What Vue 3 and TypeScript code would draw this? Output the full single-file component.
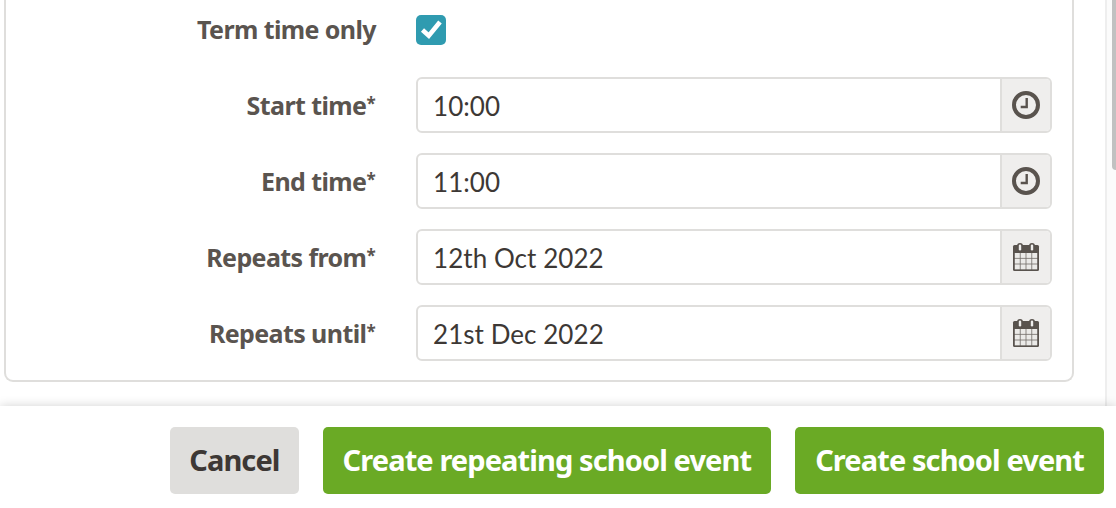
<script setup lang="ts">
interface Row { label: string; value: string; icon: 'clock' | 'cal' }
const rows: Row[] = [
  { label: 'Start time', value: '10:00', icon: 'clock' },
  { label: 'End time', value: '11:00', icon: 'clock' },
  { label: 'Repeats from', value: '12th Oct 2022', icon: 'cal' },
  { label: 'Repeats until', value: '21st Dec 2022', icon: 'cal' },
]
const colX = [2.8, 8.6, 14.4, 20.2]
const rowY = [11, 16.7, 22.4]
</script>

<template>
  <div class="page">
    <div class="main">
      <div class="scroller">
        <section class="panel">
          <div class="check-row">
            <span class="label">Term time only</span>
            <span class="checkbox">
              <svg viewBox="0 0 30 30" width="30" height="30"><path d="M6.500 15l6.300 5.700L24 7" fill="none" stroke="#fff" stroke-width="4.600"/></svg>
            </span>
          </div>
          <div v-for="r in rows" :key="r.label" class="row">
            <span class="label">{{ r.label }}<span class="req">*</span></span>
            <div class="field">
              <span class="value">{{ r.value }}</span>
              <span class="addon">
                <svg v-if="r.icon === 'clock'" viewBox="0 0 28 28" width="28" height="28">
                  <circle cx="14" cy="14" r="12" fill="none" stroke="#59534e" stroke-width="4"/>
                  <path d="M14.700 7v9H8.700" fill="none" stroke="#59534e" stroke-width="2.400"/>
                </svg>
                <svg v-else viewBox="0 0 28 30" width="28" height="30">
                  <rect x="1" y="3" width="26" height="26" rx="1.500" fill="#59534e"/>
                  <rect x="5" y="1" width="6" height="9" rx="3" fill="#59534e"/>
                  <rect x="17" y="1" width="6" height="9" rx="3" fill="#59534e"/>
                  <rect x="6.800" y="2.500" width="2.400" height="6" rx="1.200" fill="#efeeed"/>
                  <rect x="18.800" y="2.500" width="2.400" height="6" rx="1.200" fill="#efeeed"/>
                  <rect x="2.800" y="11" width="22.400" height="16.500" fill="#716c68"/>
                  <template v-for="y in rowY" :key="y">
                    <rect v-for="x in colX" :key="x" :x="x" :y="y" width="5" height="4.900" fill="#ebeae8"/>
                  </template>
                </svg>
              </span>
            </div>
          </div>
        </section>
      </div>
      <div class="track"><div class="thumb"></div></div>
    </div>
    <footer class="footer">
      <button class="btn cancel">Cancel</button>
      <button class="btn primary">Create repeating school event</button>
      <button class="btn primary">Create school event</button>
    </footer>
  </div>
</template>

<style>
html, body { margin: 0; background: #fff; overflow: hidden; }
</style>

<style scoped>
.page {
  width: 1116px;
  height: 508px;
  display: flex;
  flex-direction: column;
  font-family: "Noto Sans", sans-serif;
  overflow: hidden;
}
.main {
  height: 406px;
  display: flex;
  overflow: hidden;
}
.scroller {
  flex: 1;
  display: flex;
  flex-direction: column;
  padding: 0 31px 24px 4px;
}
.panel {
  flex: 1;
  border: 2px solid #dfdedc;
  border-top: 0;
  border-radius: 0 0 9px 9px;
  padding-bottom: 19px;
  display: flex;
  flex-direction: column;
  justify-content: flex-end;
  gap: 20px;
}
.check-row, .row {
  display: flex;
  align-items: center;
  gap: 41px;
}
.check-row { height: 30px; margin-bottom: 12px; gap: 40px; }
.check-row .label { padding-bottom: 2px; width: 370px; }
.row { height: 56px; padding-right: 20px; }
.label {
  width: 369px;
  text-align: right;
  font-weight: 700;
  font-size: 25px;
  letter-spacing: -0.6px;
  color: #5a544f;
  white-space: nowrap;
  flex: none;
}
.req { font-size: 17px; vertical-align: 5px; line-height: 0; }
.checkbox {
  width: 30px;
  height: 30px;
  background: #2f9bb0;
  border-radius: 5px;
  display: block;
}
.checkbox svg { display: block; }
.field {
  flex: 1;
  height: 56px;
  box-sizing: border-box;
  border: 2px solid #dfdedc;
  border-radius: 6px;
  display: flex;
  align-items: center;
  justify-content: space-between;
  overflow: hidden;
}
.value {
  padding: 2px 0 0 15px;
  font-family: Lato, sans-serif;
  font-size: 26px;
  color: #3d3835;
  letter-spacing: 0.05px;
}
.addon {
  width: 50px;
  height: 100%;
  box-sizing: border-box;
  border-left: 2px solid #dfdedc;
  background: #efeeed;
  display: flex;
  align-items: center;
  justify-content: center;
}
.track {
  width: 11px;
  box-sizing: border-box;
  border-left: 2px solid #eeeeee;
  background: #fbfbfb;
  position: relative;
}
.thumb {
  position: absolute;
  top: 0;
  right: 0;
  width: 4px;
  height: 170px;
  background: #c1c1c1;
  border-radius: 0 0 0 4px;
}
.footer {
  height: 102px;
  box-sizing: border-box;
  box-shadow: 0 0 10px rgba(0, 0, 0, 0.18);
  position: relative;
  background: #fff;
  padding: 21px 12px 0 0;
  display: flex;
  justify-content: flex-end;
  align-items: flex-start;
  gap: 24px;
}
.btn {
  height: 67px;
  border: 0;
  border-radius: 5px;
  padding: 0 20px 2px;
  font-family: "Noto Sans", sans-serif;
  font-weight: 700;
  font-size: 29px;
  letter-spacing: -0.9px;
}
.cancel { background: #dfdedc; color: #3d3835; padding: 0 19px 2px; }
.primary { background: #6aaa25; color: #fff; }
</style>
